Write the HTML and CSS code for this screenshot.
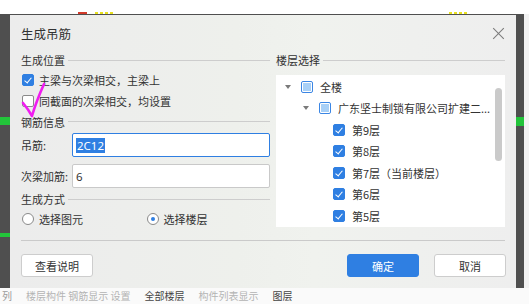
FILE: index.html
```html
<!DOCTYPE html>
<html lang="zh-CN">
<head>
  <meta charset="UTF-8" />
  <title>生成吊筋</title>
  <link rel="stylesheet" href="styles.css">
</head>
<body>
  <div class="topbar">
    <span class="bit bit-red"></span>
    <span class="bit bit-yellow"></span>
    <span class="bit bit-yellow bit-right"></span>
  </div>

  <div class="stage">
    <div class="side side-left">
      <span class="glow glow-a"></span>
      <span class="glow glow-b"></span>
    </div>

    <div class="dialog">
      <div class="dlg-head">
        <div class="dlg-title">生成吊筋</div>
        <div class="close"></div>
      </div>

      <div class="dlg-body">
        <div class="col col-left">
          <div class="legend">生成位置</div>
          <label class="row"><span class="cb checked"></span>主梁与次梁相交，主梁上</label>
          <label class="row"><span class="cb"></span>同截面的次梁相交，均设置</label>

          <div class="legend">钢筋信息</div>
          <div class="field-row first">
            <span class="field-label">吊筋:</span>
            <div class="field focus"><span class="sel">2C12</span></div>
          </div>
          <div class="field-row">
            <span class="field-label">次梁加筋:</span>
            <div class="field">6</div>
          </div>

          <div class="legend legend-tall">生成方式</div>
          <div class="radios">
            <label class="radio-item"><span class="radio"></span>选择图元</label>
            <label class="radio-item"><span class="radio on"></span>选择楼层</label>
          </div>
        </div>

        <div class="col col-right">
          <div class="legend">楼层选择</div>
          <div class="tree">
            <div class="node lvl0"><span class="arrow"></span><span class="cb part"></span>全楼</div>
            <div class="node lvl1"><span class="arrow"></span><span class="cb part"></span>广东坚士制锁有限公司扩建二...</div>
            <div class="node lvl2"><span class="cb checked"></span>第9层</div>
            <div class="node lvl2"><span class="cb checked"></span>第8层</div>
            <div class="node lvl2"><span class="cb checked"></span>第7层（当前楼层）</div>
            <div class="node lvl2"><span class="cb checked"></span>第6层</div>
            <div class="node lvl2"><span class="cb checked"></span>第5层</div>
            <div class="scrollbar"></div>
          </div>
        </div>
      </div>

      <div class="separator"></div>

      <div class="dlg-foot">
        <button class="btn">查看说明</button>
        <div class="foot-right">
          <button class="btn primary">确定</button>
          <button class="btn">取消</button>
        </div>
      </div>
    </div>

    <div class="side side-right">
      <span class="glow glow-c"></span>
    </div>
    <div class="edge"></div>
  </div>

  <div class="statusbar">
    <span class="st">列</span>
    <span class="st light">楼层构件 钢筋显示 设置</span>
    <span class="st dark">全部楼层</span>
    <span class="st light">构件列表显示</span>
    <span class="st dark">图层</span>
  </div>

  <!-- hand drawn annotation over the dialog -->
  <svg class="scribble" width="60" height="60" viewBox="0 0 60 60">
    <path d="M4 21 Q9 27 13 34 Q17 20 25 2" fill="none" stroke="#f01cf0" stroke-width="2.6" stroke-linecap="round" stroke-linejoin="round"/>
  </svg>
</body>
</html>
```

FILE: styles.css
```css
* {
  box-sizing: border-box;
  margin: 0;
  padding: 0;
}

body {
  width: 529px;
  height: 304px;
  overflow: hidden;
  background: #fff;
  font-family: "Noto Sans CJK SC", "Noto Sans", sans-serif;
  font-size: 11px;
  color: #333;
  position: relative;
}

.topbar {
  height: 14px;
  background: #fff;
  position: relative;
}

.bit {
  position: absolute;
  top: 12px;
  height: 2px;
}

.bit-red {
  left: 78px;
  width: 9px;
  background: #d23a2a;
}

.bit-yellow {
  left: 95px;
  width: 19px;
  background: repeating-linear-gradient(90deg, #e8e020 0 3px, transparent 3px 5px);
}

.bit-right {
  left: 449px;
}

.stage {
  display: flex;
  height: 274px;
  background: #4f4f4f;
}

.side {
  position: relative;
}

.side-left {
  width: 10px;
}

.side-right {
  width: 8px;
}

.edge {
  flex: 1;
  background: #f2f2f2;
}

.glow {
  position: absolute;
  left: 0;
  width: 100%;
  background: #22c43a;
}

.glow-a {
  top: 103px;
  height: 8px;
}

.glow-b {
  top: 219px;
  height: 4px;
}

.glow-c {
  top: 103px;
  height: 9px;
}

/* dialog */
.dialog {
  width: 506px;
  height: 273px;
  margin-top: 1px;
  background: linear-gradient(90deg, #ececec 0%, #eef0ec 45%, #f0f2ee 60%, #eeeeee 100%);
  display: flex;
  flex-direction: column;
}

.dlg-head {
  height: 36px;
  padding: 0 11px;
  display: flex;
  align-items: center;
  justify-content: space-between;
}

.dlg-title {
  font-size: 12.5px;
  color: #333;
}

.close {
  width: 11px;
  height: 11px;
  position: relative;
  margin-right: 1px;
}

.close::before,
.close::after {
  content: "";
  position: absolute;
  left: -2px;
  top: 5px;
  width: 15px;
  height: 1px;
  background: #7a7a7a;
  transform: rotate(45deg);
}

.close::after {
  transform: rotate(-45deg);
}

.dlg-body {
  display: flex;
  gap: 6px;
  padding: 0 11px;
  height: 182px;
}

.col-left {
  width: 249px;
}

.col-right {
  flex: 1;
}

.legend {
  display: flex;
  align-items: center;
  gap: 3px;
  height: 18px;
  color: #333;
}

.legend::after {
  content: "";
  flex: 1;
  height: 1px;
  background: #cdcdcd;
}

.row + .legend {
  height: 21px;
}

.legend-tall {
  height: 22px;
}

.row {
  display: flex;
  align-items: center;
  gap: 5px;
  height: 21px;
  padding-left: 1px;
}

.cb {
  width: 12px;
  height: 12px;
  border: 1px solid #8a8a8a;
  border-radius: 2px;
  background: #fff;
  flex: none;
  position: relative;
}

.cb.checked {
  background: #2f7fe2;
  border-color: #2f7fe2;
}

.cb.checked::after {
  content: "";
  position: absolute;
  left: 3px;
  top: 1px;
  width: 3px;
  height: 6px;
  border: solid #fff;
  border-width: 0 1.6px 1.6px 0;
  transform: rotate(40deg);
}

.cb.part {
  border-color: #3b86e4;
  background: #fff;
}

.cb.part::after {
  content: "";
  position: absolute;
  inset: 1px;
  background: #a8d0f7;
}

.field-row {
  display: flex;
  align-items: center;
  height: 24px;
  margin-bottom: 7px;
}

.field-row.first {
  margin-top: 1px;
}

.field-row + .legend {
  margin-top: -7px;
}

.field-label {
  width: 51px;
  flex: none;
}

.field {
  width: 198px;
  height: 24px;
  border: 1px solid #c9c9c9;
  border-radius: 2px;
  background: #fff;
  padding-left: 3px;
  display: flex;
  align-items: center;
  font-family: "Noto Sans", "Noto Sans CJK SC", sans-serif;
  font-size: 11.5px;
}

.field.focus {
  border-color: #2f7fe2;
}

.sel {
  background: #2f7fe2;
  color: #fff;
  padding: 0 1px;
  line-height: 15px;
}

.radios {
  display: flex;
  height: 18px;
  align-items: center;
}

.radio-item {
  display: flex;
  align-items: center;
  gap: 5px;
  width: 128px;
  padding-left: 1px;
}

.radio {
  width: 12px;
  height: 12px;
  border: 1px solid #8a8a8a;
  border-radius: 50%;
  background: #fff;
  position: relative;
  flex: none;
}

.radio.on::after {
  content: "";
  position: absolute;
  left: 3px;
  top: 3px;
  width: 4px;
  height: 4px;
  border-radius: 50%;
  background: #2f7fe2;
}

/* tree */
.tree {
  margin-top: 6px;
  height: 152px;
  background: #fff;
  padding-top: 1px;
  position: relative;
  overflow: hidden;
}

.node {
  display: flex;
  align-items: center;
  height: 21.5px;
  gap: 7px;
  white-space: nowrap;
}

.node .arrow {
  width: 0;
  height: 0;
  border-left: 3px solid transparent;
  border-right: 3px solid transparent;
  border-top: 4px solid #7a7a7a;
  margin-right: 3px;
}

.lvl0 {
  padding-left: 9px;
}

.lvl1 {
  padding-left: 27px;
}

.lvl2 {
  padding-left: 57px;
}

.scrollbar {
  position: absolute;
  left: 219px;
  top: 13px;
  width: 7px;
  height: 73px;
  border-radius: 4px;
  background: #cacaca;
}

.separator {
  margin: 7px 11px 0;
  height: 1px;
  background: #cacaca;
}

.dlg-foot {
  display: flex;
  justify-content: space-between;
  padding: 13px 10px 0 11px;
}

.foot-right {
  display: flex;
  gap: 15px;
}

.btn {
  width: 72px;
  height: 23px;
  border: 1px solid #cdcdcd;
  border-radius: 3px;
  background: #fff;
  color: #333;
  font-family: "Noto Sans CJK SC", sans-serif;
  font-size: 11px;
}

.btn.primary {
  background: #2f7fe2;
  border-color: #2f7fe2;
  color: #fff;
}

/* status bar behind the dialog */
.statusbar {
  height: 16px;
  background: #fafafa;
  display: flex;
  gap: 14px;
  padding: 1px 0 0 2px;
  font-size: 10px;
  line-height: 14px;
  white-space: nowrap;
  overflow: hidden;
  color: #9a9a9a;
}

.st.light {
  color: #b4b4b4;
}

.st.dark {
  color: #444;
}

.scribble {
  position: absolute;
  left: 19px;
  top: 82px;
}
```
